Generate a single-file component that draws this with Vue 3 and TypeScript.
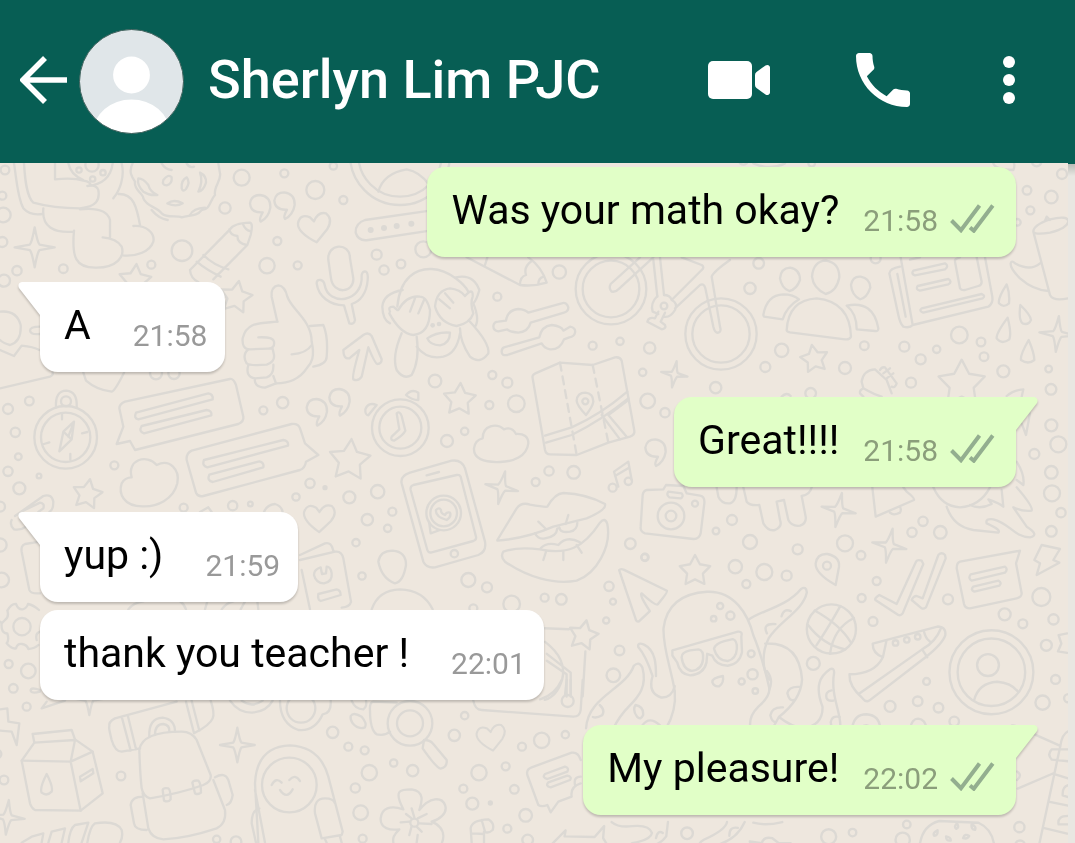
<script setup lang="ts">
interface Message {
  id: number
  text: string
  time: string
  mine: boolean
  tail: boolean
}

type Circle = [x: number, y: number, r: number]
type Mark = [x: number, y: number, size: number, turn: number]

interface Scene {
  x: number
  y: number
  scale: number
  paths: string[]
  dashed?: string[]
  circles: Circle[]
  dots?: Circle[]
  stars?: Mark[]
  sparkles?: Mark[]
  hearts?: Mark[]
  quotes?: Mark[]
}

const messages: Message[] = [
  { id: 1, text: 'Was your math okay?', time: '21:58', mine: true, tail: false },
  { id: 2, text: 'A', time: '21:58', mine: false, tail: true },
  { id: 3, text: 'Great!!!!', time: '21:58', mine: true, tail: true },
  { id: 4, text: 'yup :)', time: '21:59', mine: false, tail: true },
  { id: 5, text: 'thank you teacher !', time: '22:01', mine: false, tail: false },
  { id: 6, text: 'My pleasure!', time: '22:02', mine: true, tail: true },
]

const third = 1 / 3

function starPath(size: number): string {
  const points: string[] = []
  for (let i = 0; i < 10; i++) {
    const r = i % 2 === 0 ? size : size * 0.52
    const a = (Math.PI * i) / 5 - Math.PI / 2
    points.push(`${(r * Math.cos(a)).toFixed(1)} ${(r * Math.sin(a)).toFixed(1)}`)
  }
  return `M${points.join('L')}Z`
}

function sparklePath(s: number): string {
  const k = s * 0.14
  const m = s * 0.24
  return `M0 ${-s}Q${k} ${-m} ${m} ${-k}L${s} 0L${m} ${k}Q${k} ${m} 0 ${s}Q${-k} ${m} ${-m} ${k}L${-s} 0L${-m} ${-k}Q${-k} ${-m} 0 ${-s}Z`
}

const heartPath = 'M8 45Q-50 15 -48 -12Q-42 -42 -12 -30L0 -18Q12 -48 36 -42Q58 -25 40 5Z'
const quotePath = 'M8 22Q-28 24 -30 -5Q-26 -30 0 -30Q32 -26 31 8Q26 38 2 50Q-4 44 8 22Z'

function place(m: Mark): string {
  return `translate(${m[0]} ${m[1]}) rotate(${m[3]})`
}

function placeScaled(m: Mark): string {
  return `${place(m)} scale(${m[2]})`
}

const scenes: Scene[] = [
  {
    x: 0, y: 160, scale: third,
    paths: [
      'M42 10C50 60 52 110 70 145Q90 168 128 162',
      'M72 10C75 60 80 110 100 128Q160 145 240 145C290 140 300 120 295 90Q290 75 268 76',
      'M165 10L165 58Q220 52 250 62Q275 66 270 76M262 78Q330 72 338 10M205 10Q212 45 250 60M365 10C375 50 360 90 340 115',
      'M130 145C125 200 160 220 222 215M222 212C215 290 225 325 290 323C350 322 375 290 365 260Q350 235 308 232M240 148Q320 140 330 180L330 232M355 102C400 100 410 140 420 195M400 198C440 195 465 220 460 245C450 275 410 290 368 286',
      'M398 10C385 35 395 50 405 65C400 90 430 100 430 115C440 140 470 140 485 160C500 175 530 165 545 172C570 165 590 170 605 150C630 150 630 120 645 105C640 80 665 60 660 40L655 10',
      'M415 55Q410 75 430 95Q450 108 472 105Q450 95 445 75Q430 55 415 55Z',
      'M490 60q15 -20 25 -8q2 20 -15 24q-15 0 -10 -16ZM545 85q-2 -25 15 -33q12 15 -2 35q-10 10 -13 -2ZM600 38q20 10 18 30q-8 25 -23 27q15 -30 5 -57ZM502 130q20 -14 46 0q-20 12 -46 0Z',
      'M455 150q20 25 48 30M570 165q10 -20 45 -22M485 10q10 18 30 20M560 10q8 15 22 10',
      'M570 330L690 208Q700 190 750 188Q760 190 752 225L742 255L640 358M570 330Q572 355 595 366M590 305Q620 330 662 350M610 285Q640 315 685 328M688 208Q690 225 712 228Q712 250 740 255M728 190Q735 210 752 214',
      'M985 300C980 250 1050 245 1050 295L1060 355C1062 400 1000 405 993 355Z',
      'M950 370Q950 358 962 360Q972 362 974 375C985 440 1090 430 1085 345Q1088 332 1098 335Q1105 340 1103 360C1100 400 1080 425 1055 432L1065 480Q1062 495 1048 490L1032 436C990 435 955 410 950 370Z',
      'M1290 152L1095 180Q1065 190 1067 218Q1075 245 1105 240L1290 212',
      'M832 485L815 410Q812 380 835 376Q855 378 862 410C875 450 935 480 935 545C945 590 935 610 920 625C900 655 870 670 828 670',
      'M832 485C780 490 740 485 728 535Q725 568 750 568L805 566Q825 565 822 545Q820 530 775 532M745 568Q725 585 740 610Q750 618 800 614Q825 605 822 585L818 566M745 615Q735 650 765 655L800 652Q822 645 820 614M765 655Q760 680 795 683L828 670L820 648M875 583Q920 580 935 555M930 498L970 495Q985 530 980 590Q980 612 940 620',
      'M1030 570L1090 525Q1105 515 1115 528L1145 598Q1145 612 1132 612Q1125 610 1105 562L1085 650Q1075 665 1060 658Q1055 650 1078 570L1048 595Q1030 598 1030 570Z',
      'M0 455Q50 450 62 495Q65 545 30 555Q10 550 0 540M0 570L42 588L65 557Q100 560 118 570M120 500Q90 500 90 512Q92 525 120 522M0 685L150 650Q160 645 158 638M250 638L258 662Q290 690 335 695Q345 692 372 638',
      'M1135 95Q1150 40 1220 28Q1260 35 1288 75',
    ],
    circles: [
      [237, 30, 8], [276, 15, 20], [309, 38, 8], [278, 57, 8],
      [15, 30, 13], [7, 107, 12], [10, 165, 22], [7, 246, 15], [12, 362, 18], [51, 332, 14], [190, 326, 13],
      [454, 314, 12], [546, 272, 31], [801, 317, 23], [893, 316, 12], [832, 243, 12], [675, 144, 17],
      [725, 53, 24], [853, 40, 12], [946, 90, 27], [1030, 120, 12], [1000, 18, 11], [1130, 284, 15],
      [1152, 330, 14], [1203, 312, 13], [1270, 268, 24], [468, 640, 18], [522, 640, 17],
      [1200, -15, 150], [1200, -15, 125],
    ],
    dots: [[1112, 210, 9], [1152, 204, 9], [1190, 198, 9], [1234, 191, 9]],
    stars: [[708, 412, 50, 10], [405, 362, 50, 5]],
    sparkles: [[104, 262, 60, 0]],
    hearts: [[942, 202, 1, 0]],
    quotes: [[780, 135, 1, 0], [853, 127, 1, 0]],
  },
  {
    x: 420, y: 160, scale: third,
    paths: [
      'M-68 440C-60 350 -10 325 35 327C90 330 135 375 145 395M-52 390Q-110 400 -113 440Q-112 480 -90 490',
      'M-90 455Q-98 440 -80 440L-68 450M-92 460Q-60 520 -20 525Q30 520 30 450Q20 410 0 410Q-40 405 -65 450M-30 455L-15 415M-5 460L12 420',
      'M-55 520Q-85 590 -70 630Q-50 660 -25 645Q0 600 -10 530',
      'M45 440Q50 390 90 385Q120 388 135 408Q160 380 158 410Q150 430 160 460Q150 490 110 498Q60 490 45 440M75 400L100 428M58 418L90 445',
      'M108 352Q160 340 178 390Q170 420 160 430M160 430Q180 480 165 500M120 505Q120 545 150 590Q180 615 205 580Q210 550 150 485',
      'M-10 560Q20 600 70 590Q110 580 120 520M22 535Q50 515 90 518Q90 550 60 556Q30 555 22 535Z',
      'M140 292L300 375Q340 380 380 368Q365 320 325 292M300 375Q300 350 318 345Q310 320 335 303M355 372Q355 355 370 350M195 315L202 292',
      'M325 458L425 430Q440 425 445 442Q445 455 432 458L332 488Q325 515 295 518Q265 515 262 508L235 514Q220 512 220 498Q222 485 235 485L258 482Q262 450 295 447Q315 448 325 458Z',
      'M252 562L358 532Q365 498 395 495Q425 498 430 512L450 500Q468 503 465 518Q463 530 448 532L432 538Q420 570 390 568Q372 565 365 550L262 585Q245 588 245 575Q245 565 252 562Z',
      'M660 292L572 372Q565 385 575 395Q588 397 595 388L700 292M700 300L712 410M720 292L732 405',
      'M712 408Q690 430 698 455L715 462M732 405Q750 405 755 420L845 330Q855 322 845 315L785 292M755 420Q775 430 765 450Q750 475 730 470M765 445L840 375Q852 368 856 385L880 500Q885 520 895 518Q905 515 900 500L875 350Q880 335 930 300',
      'M715 455L705 475Q685 470 682 485L725 508Q740 505 735 495L722 485L735 458',
    ],
    circles: [
      [573, 387, 106], [573, 387, 85], [903, 522, 107], [903, 522, 86], [732, 438, 10],
      [418, 336, 20], [232, 410, 12], [45, 663, 19], [217, 645, 12], [262, 668, 15], [208, 735, 12], [289, 731, 25],
      [518, 557, 12], [600, 544, 11], [689, 564, 17], [668, 637, 11], [683, 723, 22], [735, 758, 14], [887, 683, 17],
    ],
    dots: [[38, 496, 7], [57, 492, 7]],
    stars: [[119, 719, 50, 3]],
    sparkles: [[763, 643, 40, 10]],
  },
  {
    x: 300, y: 340, scale: third,
    paths: [
      'M318 165Q335 145 355 158L355 180Q335 180 318 165ZM230 195Q205 185 196 208Q195 225 205 226Z',
      'M290 220Q300 212 305 228L316 272Q310 285 282 302Q270 300 275 290L298 268Z',
      'M548 295C548 255 590 248 612 268Q635 258 648 282Q685 280 685 310C680 350 640 365 600 366C550 368 520 355 522 325Q525 300 548 295Z',
      'M780 68L706 100Q695 105 698 115L735 330Q738 343 750 343L830 345L925 308L990 290Q1005 285 1003 272L965 62Q960 50 945 52L878 75Z',
      'M735 287L815 262Q900 225 982 155M738 308L815 285Q905 240 985 175M905 225L960 298M925 225L980 290M925 225L985 180',
      'M858 225Q830 195 830 182Q832 158 856 158Q880 160 880 185Q878 200 858 225Z',
      'M955 440L942 395L985 365L995 420M945 408L987 383',
      'M330 398L455 362Q485 358 495 385L555 605Q560 635 535 645L405 682Q380 685 370 665L305 430Q300 408 330 398Z',
      'M340 435L470 405Q478 403 482 410L528 590Q530 600 520 603L395 637Q385 640 382 630L332 450Q330 438 340 435ZM380 406L417 396',
      'M387 545L392 580L420 570M408 510Q405 530 440 540Q455 530 450 518Q440 515 435 525Q422 520 423 510Q418 500 408 510Z',
      'M592 600L650 505Q665 485 690 494Q735 502 742 500Q765 460 790 459Q860 462 915 492Q920 510 860 535Q800 550 760 560Q680 595 592 602Z',
      'M610 635Q650 620 720 628C800 645 850 625 900 548Q915 530 922 552C935 620 890 700 830 722C760 735 680 710 615 665Q600 650 610 635Z',
      'M715 545L738 567M805 525L797 552M705 580Q715 600 735 595Q770 590 772 565M778 562Q780 580 810 575Q832 570 832 548M722 625Q740 605 775 615Q800 585 840 607M738 635L730 660M790 635L790 660M830 615L845 638',
      'M235 665Q240 632 278 632Q318 635 318 675Q310 725 285 730Q245 715 235 665ZM215 808Q235 750 300 748Q370 750 398 808',
      'M0 645L75 610Q95 605 100 632M0 660L105 635Q125 632 130 655L153 785Q150 800 125 803M5 690L30 808',
      'M62 682Q42 688 42 705Q48 730 72 730Q98 725 95 700Q92 680 80 680L78 700L66 702ZM55 762L110 748Q122 750 122 765L62 783Q52 780 55 762Z',
    ],
    dashed: ['M780 68L830 345', 'M878 75L925 308'],
    circles: [
      [301, 263, 85], [301, 263, 63], [856, 184, 9], [938, 443, 12], [985, 424, 11], [463, 641, 11], [431, 519, 52], [431, 519, 40],
      [441, 303, 18], [494, 274, 11], [30, 430, 14], [148, 472, 18], [233, 455, 20], [202, 539, 17], [277, 515, 12],
      [263, 565, 11], [168, 608, 11], [186, 708, 11], [505, 720, 21], [561, 742, 15], [747, 393, 14], [821, 397, 19],
      [707, 426, 12], [734, 773, 12], [784, 778, 16], [635, 792, 25], [991, 611, 16], [1034, 652, 10], [927, 739, 14],
      [939, 785, 9], [520, 805, 12],
    ],
    dots: [[75, 443, 8]],
    stars: [[149, 361, 64, 5]],
    sparkles: [[605, 443, 50, 12]],
    hearts: [[56, 533, 0.95, 8]],
    quotes: [[50, 207, 1, 0], [118, 177, 1, 0], [1066, 328, 1, 0]],
  },
  {
    x: 0, y: 380, scale: third,
    paths: [
      'M168 82Q165 32 199 32Q233 35 230 82M222 125L190 155L178 214L215 178ZM190 155L215 178M222 125L205 170M186 102L186 118M246 160L262 156M211 240L211 222M132 192L148 187',
      'M375 65L690 -3Q700 -5 708 15L730 110Q732 125 715 132L405 210L390 183L350 192L370 140L358 85Q358 72 375 65Z',
      'M408 98L625 40Q640 42 638 58L415 118Q400 115 408 98ZM425 138L620 90Q637 92 634 106L432 160Q415 155 425 138Z',
      'M575 212L875 132Q895 130 900 145L915 190L955 225L918 245Q915 265 900 270L610 348Q595 352 588 338L560 240Q558 220 575 212Z',
      'M612 240L850 180Q866 182 864 197L622 262Q605 258 612 240ZM628 284L778 244Q793 248 790 262L638 306Q620 302 628 284Z',
      'M395 292C380 240 440 220 470 255C510 235 540 270 532 310C520 360 470 380 430 379C370 380 355 340 365 310Q375 292 395 292Z',
      'M45 408L130 348Q155 340 160 365Q160 390 148 396M62 396L120 368Q135 370 130 385L115 396M35 420Q28 435 42 448Q60 452 78 440',
      'M120 485L75 492Q62 497 65 515L88 630Q92 642 120 640',
      'M600 396L625 382L635 396M792 396Q800 375 825 372Q845 378 848 396',
      'M385 688Q400 668 430 664M540 664Q552 672 558 688M615 688L622 664M665 688Q680 668 700 664M722 688L735 664M772 664L775 688',
    ],
    circles: [
      [197, 172, 94], [197, 172, 74], [198, 64, 15],
      [24, 87, 15], [88, 63, 13], [46, 157, 14], [55, 230, 10], [24, 274, 14], [117, 288, 7], [58, 325, 18],
      [0, 380, 15], [343, 256, 12], [848, 68, 17], [790, 91, 12], [888, 351, 11], [698, 377, 14], [751, 372, 7],
      [551, 383, 12], [0, 495, 20], [5, 600, 22],
    ],
    stars: [[262, 343, 46, 10]],
  },
  {
    x: 0, y: 590, scale: third,
    paths: [
      'M5 100Q2 130 22 130Q28 150 20 160Q35 178 48 175Q52 160 66 162Q82 165 85 177Q105 175 115 165M5 100L0 95M22 62Q35 40 48 42Q55 60 68 58Q80 55 84 42Q100 45 117 60M22 62Q28 80 15 90L5 100M120 125Q105 130 110 150',
      'M0 358L22 355L25 395L58 400L50 465L35 425L0 422M120 300Q92 290 92 302Q95 312 120 305M140 335L125 355L195 332',
      'M98 432L215 420L225 448L278 485L308 610L242 662L105 660Q95 655 90 640L65 512L103 458Z',
      'M103 458L225 450L212 515L65 512M212 515L242 662M212 515L278 485M140 552Q118 595 125 608Q140 620 155 605Q160 590 140 552ZM240 560L278 537L280 550L242 574Z',
      'M530 335L345 385Q325 395 328 410Q325 410 335 450Q345 485 365 485L420 475M365 380L392 482M383 375L408 478M558 335L582 430M575 332L598 422M632 332Q645 370 638 385Q630 405 582 430M448 440Q445 385 488 383Q525 388 525 425M465 435Q465 402 490 402Q510 405 508 425',
      'M418 480Q425 425 545 425Q575 425 590 450L632 555Q635 575 610 585Q540 610 450 625Q430 620 425 595Q420 550 418 480Z',
      'M428 610L445 715Q455 745 490 748Q560 745 650 715Q680 700 675 660L640 570M430 620Q395 620 392 645L402 700Q405 720 440 720M645 562Q675 545 685 570L698 615Q695 640 680 645',
      'M488 600Q490 592 505 595Q512 600 512 628Q505 638 492 632ZM577 578Q580 570 595 572Q603 580 603 608Q595 615 585 610Z',
      'M65 758L95 740L130 730L125 758M145 758L155 725L195 715L185 758M205 758Q210 715 225 705L265 698L245 758M262 758Q270 710 285 700Q350 690 365 720Q370 740 360 758',
    ],
    circles: [[66, 110, 26], [26, 222, 12], [85, 243, 22], [40, 295, 13], [80, 350, 12], [12, 570, 13], [363, 558, 13], [-8, 492, 12]],
    sparkles: [[22, 682, 52, 5], [712, 465, 52, 0], [268, 325, 50, 0]],
  },
  {
    x: 230, y: 680, scale: third,
    paths: [
      'M85 488L75 310Q80 200 180 196Q270 200 295 290L338 455L335 465L275 475L255 400Q250 355 285 355Q310 355 315 370M88 385Q65 390 65 430L78 488M75 330L105 488M285 478L290 488M330 470L335 488',
      'M125 315Q138 290 155 308M178 300Q195 280 210 303M150 330Q170 360 188 328',
      'M150 62Q150 130 205 150Q255 155 278 103Q305 100 302 62M0 62Q25 98 65 98Q110 95 128 62M35 62Q65 85 98 62',
      'M365 62Q375 88 400 88Q412 78 408 62M362 108Q370 95 395 110Q412 130 405 142Q385 150 368 130Q360 118 362 108Z',
      'M582 180Q600 180 608 190L650 240Q652 262 632 266Q620 265 578 205ZM500 68L430 65Q418 68 420 90Q420 150 440 163Q465 168 480 155',
      'M730 62Q735 90 755 90L1030 110Q1050 110 1052 90L1058 0M1010 0L1005 45M1022 0L1022 45M930 58Q975 45 995 0',
      'M905 262L1025 218Q1045 215 1052 240M905 262Q888 268 892 285L925 375Q935 382 952 375L962 397L985 365L1025 350Q1020 320 1052 310M1052 290Q1030 290 1035 315M945 282L1005 260Q1018 264 1012 275L952 297Q935 293 945 282ZM955 307L1012 287Q1027 290 1020 300L962 322Q945 318 955 307Z',
      'M520 388C490 330 510 328 545 328C590 335 572 375 568 390C600 350 635 350 645 375C655 400 625 420 605 425C640 440 645 465 636 488M520 388C480 375 455 385 452 415C450 445 480 452 508 448C490 465 488 475 490 488',
      'M553 412L545 385M563 415L590 402M568 430L605 432M560 440L575 455M540 425L512 427M545 438L538 465M545 415L528 402M563 465L560 488',
      'M725 488L722 445Q725 420 775 418Q795 430 788 450Q775 462 762 455L762 488M725 460L762 462M755 420L765 455',
    ],
    circles: [
      [178, 315, 82], [213, 85, 43], [540, 130, 67], [540, 130, 39], [1013, 63, 18], [553, 428, 12],
      [308, 157, 17], [355, 200, 12], [404, 211, 12], [418, 278, 23], [491, 249, 11], [548, 272, 17], [376, 324, 14],
      [392, 398, 22], [398, 476, 12], [18, 485, 16], [-40, 478, 11], [673, 166, 17], [704, 107, 11], [876, 200, 12],
      [935, 181, 23], [1006, 164, 11], [747, 278, 23], [827, 259, 12], [853, 328, 13], [700, 326, 12], [727, 371, 18],
      [887, 406, 19], [832, 446, 12], [893, 480, 16],
    ],
    dots: [[781, 369, 8]],
    hearts: [[782, 172, 0.88, 0]],
  },
  {
    x: 700, y: 160, scale: third,
    paths: [
      'M240 355Q242 325 270 323Q300 328 300 360Q290 388 268 393Q245 385 240 355ZM336 350Q340 303 378 302Q418 308 418 352Q410 395 377 402Q340 385 336 350ZM453 375Q458 348 482 350Q510 355 511 383Q500 415 480 418Q455 405 453 375Z',
      'M260 510Q265 420 350 415Q450 425 453 530Q448 540 435 538L270 517Q260 515 260 510ZM190 465Q200 405 250 403Q280 403 297 418Q260 440 248 478L192 470ZM440 437Q520 420 535 505Q535 515 525 513L470 508Q470 460 440 437Z',
      'M602 292L638 495Q630 505 610 500Q600 490 595 465L568 340Q570 325 600 320M592 342L617 470M638 495L865 440Q880 430 877 410L855 292',
      'M640 332L735 310Q748 318 735 328L645 346Q632 342 640 332ZM653 378L745 357Q758 365 745 373L660 392Q645 388 653 378ZM665 445L845 402Q858 408 848 415L670 458Q655 452 665 445ZM630 299L660 292M780 292Q762 297 765 305L780 385Q785 392 795 390L835 378Q845 375 845 365L830 292',
      'M920 373Q893 415 897 430Q910 445 927 430Q930 400 920 373ZM961 435Q955 480 968 490Q985 497 993 480Q992 465 961 435ZM923 473Q888 520 890 535Q905 555 928 538Q935 520 923 473ZM986 540Q960 585 963 600Q985 615 1003 600Q1003 580 986 540Z',
      'M1000 215Q1000 195 1050 178Q1105 165 1105 185Q1100 205 1050 218Q1005 225 1000 215L1050 405Q1060 425 1104 415M1035 182L1040 170L1050 180M1020 310Q990 335 945 310Q935 300 932 310Q930 325 960 355Q1000 390 1045 393',
      'M545 710Q525 705 490 685L485 665Q490 630 525 628L560 660L575 700M490 685Q478 690 480 700L490 710M540 630Q545 620 555 622L590 670Q585 685 575 680M550 640L570 625M560 655L580 640',
      'M920 708Q940 690 970 688L965 710M245 710Q260 695 272 708M120 10q10 8 20 0M160 10Q210 32 255 10M880 10Q885 28 940 30Q945 18 942 10',
    ],
    circles: [
      [176, 310, 16], [150, 385, 17], [245, 571, 20], [196, 621, 15], [435, 624, 18], [493, 557, 13], [613, 560, 15],
      [710, 568, 11], [662, 598, 15], [778, 525, 25], [843, 546, 13], [852, 590, 13], [910, 634, 18], [1046, 627, 10],
      [1053, 688, 16], [633, 668, 15], [332, 700, 16], [1054, 111, 19], [981, 91, 13], [991, 151, 12], [1086, 42, 15],
      [952, 187, 10], [527, 295, 15], [335, 10, 10], [1010, 5, 14],
    ],
    stars: [[343, 597, 43, -10], [785, 672, 73, 0]],
    sparkles: [[1072, 522, 54, 5]],
  },
  {
    x: 640, y: 380, scale: third,
    paths: [
      'M20 330L70 328L78 315L130 318L140 340L180 347Q195 350 193 370L182 460Q178 478 160 477L15 460Q0 455 2 440L8 345Q10 332 20 330ZM85 335L125 340Q132 350 122 355L88 352Q78 345 85 335Z',
      'M230 322L235 350Q245 372 270 370Q290 365 290 322M310 322L320 365Q330 378 358 375L370 430Q385 455 405 450Q428 440 420 420L410 365L432 360L445 420Q455 440 480 437Q500 430 497 410L485 348Q510 345 515 322',
      'M697 322L707 410L822 360Q825 355 800 335L790 322M750 398Q760 408 780 398Q785 390 780 380',
      'M880 322Q905 380 960 382Q1020 378 1050 322M920 380Q940 440 1000 450L1075 458Q1085 450 1040 430Q1035 415 1060 418C1110 430 1120 470 1170 472Q1200 465 1160 440L1120 382Q1145 395 1175 392Q1180 380 1130 322M1130 245Q1155 285 1150 315L1130 300M990 375Q1020 390 1055 372L1045 358Q1080 370 1090 380L1085 330M1145 130L1158 165L1170 100',
      'M587 615Q525 580 527 550Q532 520 562 522Q600 530 597 560Z',
      'M706 660Q702 655 718 645L770 672L828 545Q832 538 845 542L850 552L788 700Q782 708 775 705ZM815 660Q820 648 830 648L848 655L895 525Q905 515 915 525L917 535L858 682Q850 688 845 685Z',
      'M960 545L1140 512L1128 550L1145 640Q1145 652 1130 655L990 685Q975 685 972 672L950 565Q950 548 960 545ZM992 583L1095 560Q1105 568 1095 578L995 602Q983 595 992 583ZM1000 620L1075 602Q1087 608 1078 617L1003 635Q990 630 1000 620Z',
      'M1205 495L1260 507L1240 540L1258 548L1190 585L1200 550L1183 540Z',
    ],
    circles: [
      [93, 408, 40], [93, 408, 16], [165, 371, 9], [561, 557, 12],
      [1234, 136, 18], [1255, 193, 24], [1183, 222, 15], [1234, 277, 19], [1236, 340, 24], [1263, 398, 14],
      [1234, 454, 16], [330, 486, 21], [276, 420, 15], [228, 453, 10], [473, 508, 15], [615, 490, 24], [663, 526, 13],
      [816, 457, 14], [849, 424, 14], [901, 457, 19], [286, 560, 20], [373, 576, 24], [440, 587, 15], [319, 612, 12],
      [15, 532, 11], [710, 603, 12], [665, 654, 12], [924, 658, 15], [1204, 651, 27], [1094, 703, 18],
    ],
    stars: [[165, 573, 48, 0]],
    sparkles: [[596, 390, 52, 11], [748, 497, 52, 11]],
  },
  {
    x: 540, y: 560, scale: 0.3412,
    paths: [
      'M232 30Q235 25 245 28L372 90Q375 95 345 130Q338 135 298 98Q290 102 322 150L290 180Q282 182 280 172Z',
      'M14 200L85 203M133 268L125 400M15 240Q80 290 65 350Q50 400 14 410M20 275L90 330L90 400M20 295L78 335L78 400',
      'M395 385C385 320 360 260 362 200Q375 100 490 93C570 90 610 160 625 220Q650 280 672 375',
      'M388 265L580 210Q595 208 590 225L592 270Q585 305 550 310Q515 308 505 280L490 275L488 300Q480 335 440 338Q410 335 402 300L388 280Z',
      'M415 285Q415 270 440 265L465 262Q480 265 478 290Q475 322 445 325Q420 322 415 285ZM510 260Q515 245 540 238L565 232Q578 235 577 260Q575 290 550 296Q520 295 510 260ZM536 340Q505 345 505 358Q510 372 525 370Q540 360 536 340Z',
      'M612 175C640 150 720 140 765 85Q780 75 782 95C770 150 700 180 670 230C650 270 650 320 672 350M660 245Q760 240 768 350Q765 410 700 460L682 493M700 460Q740 490 770 493Q830 485 828 430C805 370 820 340 850 320Q862 315 862 330C850 400 885 450 880 493M672 375Q675 400 640 430Q610 460 617 493',
      'M135 493C140 400 250 380 275 310Q290 295 300 315C315 370 290 400 260 430Q235 455 215 493M395 370Q385 405 355 403Q315 390 330 340Q310 280 288 255Q285 240 305 248C340 265 340 310 340 340M395 385Q400 440 370 493',
      'M665 215Q650 185 690 188M708 165Q715 140 735 150M760 372Q730 370 725 390Q730 415 745 410M712 432Q680 430 675 455Q680 475 690 475M855 382Q835 385 840 405Q845 415 860 412M878 460Q855 455 852 475L855 493M175 425Q192 440 182 455Q165 465 155 460M280 425Q305 430 302 455Q295 470 285 460Q270 440 280 425ZM300 485Q320 455 352 485M665 325Q685 350 672 380',
      'M805 148Q880 190 910 240M785 190Q830 250 895 262M880 135Q850 190 810 250M920 170Q860 200 850 275',
      'M975 245L1165 195Q1190 195 1188 220Q1180 245 1130 285L965 412Q955 418 945 405Q905 370 907 335Q980 335 1005 285Q975 275 975 245ZM935 392L1120 262Q1160 240 1175 200M1015 238L1005 285M1120 262L1135 285M1125 208Q1130 230 1142 238',
      'M1272 412Q1285 360 1340 357Q1380 360 1400 385M1545 215L1520 220L1528 245L1518 268L1545 272',
      'M915 493Q920 452 957 452Q995 455 997 493M940 493Q957 475 972 493M1085 493Q1090 465 1108 465Q1130 468 1132 493',
      'M1378 493Q1380 480 1395 487L1525 545L1460 848M1400 670L1505 625M1525 545Q1530 510 1548 502M1548 555L1500 555Q1485 570 1500 585L1548 590M1490 708L1548 720M1475 785L1545 802M1510 628L1548 640M1398 620Q1415 630 1398 645M1548 660Q1530 665 1532 690L1548 695M1548 750Q1515 750 1520 775L1548 775',
      'M1112 848Q1115 780 1170 765L1285 770Q1330 790 1332 848Q1360 825 1362 848M1165 792q-15 8 -10 16q12 0 10 -16ZM1190 810q0 15 14 12q0 -10 -14 -12ZM1222 772q-10 10 -2 16q10 -4 2 -16ZM1265 775q-2 15 10 16q5 -10 -10 -16ZM1240 815q5 -15 18 -6q-5 10 -18 6Z',
      'M210 768Q230 785 270 780Q320 775 328 800Q325 820 270 830Q255 842 280 845Q345 845 370 810L375 768M340 815Q345 790 360 800M548 768Q545 790 480 820Q455 835 480 842Q570 835 600 768M555 808Q555 780 580 785M620 848L615 825L650 830Q655 810 680 815L700 830L735 830L740 848M625 770Q660 780 710 768',
      'M20 848L75 792L72 810L160 812L188 780L185 815L205 848',
    ],
    circles: [
      [854, 202, 72], [1042, 243, 8], [1075, 234, 8], [1107, 225, 8], [1323, 329, 123], [1323, 329, 99], [1313, 308, 32],
      [194, 177, 9], [233, 265, 14], [215, 338, 20], [528, 135, 9], [558, 163, 12], [509, 172, 8], [619, 275, 10],
      [623, 335, 15], [591, 356, 9], [631, 384, 8], [976, 180, 13], [801, 303, 19], [1133, 356, 10], [1107, 414, 14],
      [1026, 429, 16], [1168, 433, 14], [1214, 473, 14], [1415, 187, 13], [1505, 174, 15], [1484, 250, 16],
      [1511, 350, 13], [1473, 418, 21], [1548, 405, 12], [431, 801, 17], [846, 811, 22], [916, 799, 11],
      [1063, 820, 21], [1405, 783, 15], [1407, 836, 14], [1075, 775, 11],
    ],
    stars: [[127, 221, 45, 12]],
  },
]
</script>

<template>
  <main class="screen">
    <header class="bar">
      <button class="back" type="button" aria-label="Back">
        <svg width="47" height="48" viewBox="0 0 47 48" aria-hidden="true">
          <path d="M47 24H5M25 2L3 24L25 46" fill="none" stroke="#fff" stroke-width="5.6" />
        </svg>
      </button>
      <svg class="avatar" width="106" height="106" viewBox="0 0 106 106" aria-hidden="true">
        <defs>
          <clipPath id="avatar-clip"><circle cx="52.5" cy="53.5" r="51.5" /></clipPath>
        </defs>
        <circle cx="52.5" cy="53.5" r="52" fill="#e0e6e9" />
        <g clip-path="url(#avatar-clip)" fill="#fff">
          <circle cx="52.5" cy="47" r="18.4" />
          <ellipse cx="52.5" cy="104" rx="38" ry="32.5" />
        </g>
        <circle cx="52.5" cy="53.5" r="52" fill="none" stroke="#3c5f5a" stroke-width="1" />
      </svg>
      <h1 class="name">Sherlyn Lim PJC</h1>
      <nav class="actions" aria-label="Chat actions">
        <button class="action" type="button" aria-label="Video call">
          <svg width="62" height="38" viewBox="0 0 62 38" aria-hidden="true">
            <rect width="44" height="38" rx="5" fill="#fff" />
            <path d="M47 14Q47 12 48.500 11L57.500 4.500Q59 3.500 60.500 4.200Q62 5 62 6.500V31.500Q62 33 60.500 33.800Q59 34.500 57.500 33.500L48.500 27Q47 26 47 24Z" fill="#fff" />
          </svg>
        </button>
        <button class="action" type="button" aria-label="Voice call">
          <svg width="54" height="54" viewBox="3 3 18 18" aria-hidden="true">
            <path d="M6.620 10.790c1.440 2.830 3.760 5.140 6.590 6.590l2.200-2.200c.27-.27.67-.36 1.020-.24 1.120.37 2.330.57 3.570.57.55 0 1 .45 1 1V20c0 .55-.45 1-1 1-9.390 0-17-7.610-17-17 0-.55.45-1 1-1h3.500c.55 0 1 .45 1 1 0 1.250.2 2.450.57 3.570.11.35.03.74-.25 1.020z" fill="#fff" />
          </svg>
        </button>
        <button class="action more" type="button" aria-label="More options">
          <svg width="12" height="48" viewBox="0 0 12 48" aria-hidden="true">
            <g fill="#fff">
              <circle cx="6" cy="6" r="6" />
              <circle cx="6" cy="24" r="6" />
              <circle cx="6" cy="42" r="6" />
            </g>
          </svg>
        </button>
      </nav>
    </header>

    <section class="chat" aria-label="Conversation">
      <svg class="wallpaper" viewBox="0 163 1075 680" preserveAspectRatio="xMinYMin slice" aria-hidden="true">
        <g v-for="(s, i) in scenes" :key="i" :transform="`translate(${s.x} ${s.y}) scale(${s.scale})`">
          <path v-for="(d, j) in s.paths" :key="`p${j}`" :d="d" />
          <path v-for="(d, j) in s.dashed ?? []" :key="`d${j}`" class="dashed" :d="d" />
          <circle v-for="(c, j) in s.circles" :key="`c${j}`" :cx="c[0]" :cy="c[1]" :r="c[2]" />
          <circle v-for="(c, j) in s.dots ?? []" :key="`o${j}`" class="dot" :cx="c[0]" :cy="c[1]" :r="c[2]" />
          <path v-for="(m, j) in s.stars ?? []" :key="`s${j}`" :d="starPath(m[2])" :transform="place(m)" />
          <path v-for="(m, j) in s.sparkles ?? []" :key="`k${j}`" :d="sparklePath(m[2])" :transform="place(m)" />
          <path v-for="(m, j) in s.hearts ?? []" :key="`h${j}`" :d="heartPath" :transform="placeScaled(m)" />
          <path v-for="(m, j) in s.quotes ?? []" :key="`q${j}`" :d="quotePath" :transform="placeScaled(m)" />
        </g>
      </svg>
      <div class="edge" aria-hidden="true"></div>

      <ol class="messages">
        <li
          v-for="m in messages"
          :key="m.id"
          class="bubble"
          :class="{ mine: m.mine, theirs: !m.mine, tailed: m.tail, joined: m.id === 5 }"
        >
          <svg v-if="m.tail" class="tail" width="24" height="34" viewBox="0 0 24 34" aria-hidden="true">
            <path d="M24 0H4Q-1 1 1 6L22 33V34H24Z" />
          </svg>
          <span class="text">{{ m.text }}</span>
          <span class="meta">
            <time>{{ m.time }}</time>
            <svg v-if="m.mine" class="ticks" width="45" height="30" viewBox="0 0 45 30" role="img" aria-label="Delivered">
              <path d="M1.500 17.500L11 27.200L29.500 2.500M20 24.500L23.800 27.700L42.800 2.500" fill="none" stroke="#93ae8f" stroke-width="4" />
            </svg>
          </span>
        </li>
      </ol>
    </section>
  </main>
</template>

<style>
body {
  margin: 0;
}
</style>

<style scoped>
.screen {
  display: flex;
  flex-direction: column;
  min-height: 100vh;
  font-family: Roboto, "Noto Sans", sans-serif;
  background: #eee7de;
}

.bar {
  display: flex;
  align-items: flex-start;
  padding: 28px 12px 29px 20px;
  background: #075e54;
  color: #fff;
}

button {
  display: flex;
  align-items: center;
  justify-content: center;
  height: 104px;
  padding: 0;
  border: 0;
  background: none;
  cursor: pointer;
}

.back {
  flex: none;
  margin-right: 12px;
}

.avatar {
  flex: none;
}

.name {
  flex: 1;
  min-width: 0;
  margin: 0;
  padding-left: 23px;
  font-size: 54px;
  font-weight: 500;
  line-height: 104px;
  white-space: nowrap;
}

.actions {
  display: flex;
  flex: none;
}

.action {
  width: 144px;
}

.more {
  width: 108px;
}

.chat {
  position: relative;
  flex: 1;
  overflow: hidden;
}

.wallpaper {
  position: absolute;
  inset: 0;
  width: 100%;
  height: 100%;
  fill: none;
  stroke: #dcd9d4;
  stroke-width: 7;
  stroke-linecap: round;
  stroke-linejoin: round;
}

.dashed {
  stroke-dasharray: 24 18;
}

.dot {
  fill: #dcd9d4;
  stroke: none;
}

.edge {
  position: absolute;
  top: 0;
  right: 0;
  bottom: 0;
  width: 7px;
  background: linear-gradient(#b9bcb7, #e9e7e2 12px);
  border-top: 1px solid #075e54;
}

.messages {
  position: relative;
  display: flex;
  flex-direction: column;
  gap: 25px;
  margin: 0;
  padding: 4px 59px 28px 40px;
  list-style: none;
}

.bubble {
  position: relative;
  display: flex;
  align-items: flex-start;
  padding: 18px 18px 18px 24px;
  border-radius: 18px;
  filter: drop-shadow(0 2px 1px rgba(0, 0, 0, 0.2));
}

.theirs {
  align-self: flex-start;
  gap: 42px;
  background: #fff;
  fill: #fff;
}

.mine {
  align-self: flex-end;
  gap: 24px;
  padding-right: 21px;
  background: #e1ffc7;
  fill: #e1ffc7;
}

.joined {
  margin-top: -17px;
}

.theirs.tailed {
  border-top-left-radius: 0;
}

.mine.tailed {
  border-top-right-radius: 0;
}

.tail {
  position: absolute;
  top: 0;
  left: -22px;
}

.mine .tail {
  right: -22px;
  left: auto;
  transform: scaleX(-1);
}

.text {
  font-size: 41px;
  line-height: 50px;
  color: #000;
}

.meta {
  display: flex;
  align-items: flex-start;
  gap: 12px;
  padding-top: 18px;
  font-size: 30px;
  line-height: 36px;
  color: #999;
}

.mine .meta {
  color: #8b9e7b;
}
</style>
